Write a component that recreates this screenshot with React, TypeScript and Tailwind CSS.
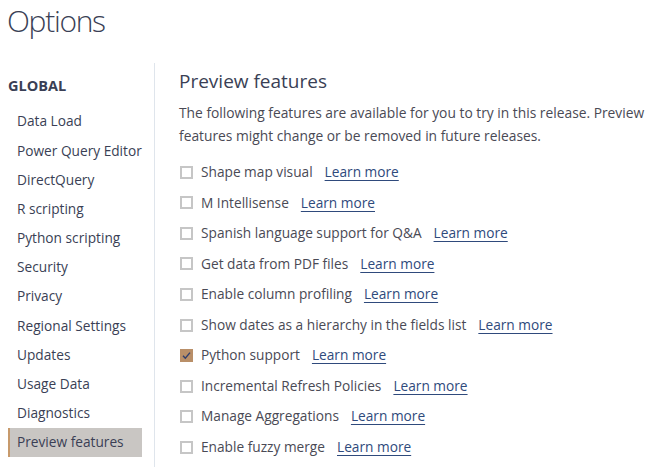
import React from "react";

const navItems = [
  "Data Load",
  "Power Query Editor",
  "DirectQuery",
  "R scripting",
  "Python scripting",
  "Security",
  "Privacy",
  "Regional Settings",
  "Updates",
  "Usage Data",
  "Diagnostics",
  "Preview features",
];

const features = [
  { label: "Shape map visual", checked: false },
  { label: "M Intellisense", checked: false },
  { label: "Spanish language support for Q&A", checked: false },
  { label: "Get data from PDF files", checked: false },
  { label: "Enable column profiling", checked: false },
  { label: "Show dates as a hierarchy in the fields list", checked: false },
  { label: "Python support", checked: true },
  { label: "Incremental Refresh Policies", checked: false },
  { label: "Manage Aggregations", checked: false },
  { label: "Enable fuzzy merge", checked: false },
];

function Checkbox({ checked }: { checked: boolean }) {
  if (checked) {
    return (
      <span className="flex h-[13px] w-[13px] shrink-0 items-center justify-center bg-[#b98f68]">
        <svg width="11" height="11" viewBox="0 0 11 11" fill="none">
          <path d="M2 5.8 L4.3 8.2 L9 2.6" stroke="#2f3f6e" strokeWidth="1.4" />
        </svg>
      </span>
    );
  }
  return <span className="h-[13px] w-[13px] shrink-0 border-2 border-[#c6c6c6] bg-white" />;
}

export default function App() {
  return (
    <div className="h-[470px] w-[656px] overflow-hidden bg-white text-[#3b3b45]" style={{ fontFamily: '"Open Sans", "Noto Sans", sans-serif' }}>
      {/* Title */}
      <h1 className="pl-[7px] pt-[2px] text-[30px] font-light leading-[38px] tracking-[-1.3px] text-[#3a3f55]">Options</h1>

      <div className="mt-[23px] flex">
        {/* Sidebar */}
        <div className="w-[154px] shrink-0 pl-[8px]">
          <div className="mt-[13px] text-[14.5px] font-bold leading-[20px] text-[#3a3f55]">GLOBAL</div>
          <ul className="mt-[11px] pr-[12px]">
            {navItems.map((item) => {
              const active = item === "Preview features";
              return (
                <li
                  key={item}
                  className={
                    active
                      ? "flex h-[29.2px] items-center border-l-2 border-[#c79a6c] bg-[#c9c6c3] pl-[7px] text-[13.7px] text-[#3a3f55]"
                      : "flex h-[29.2px] items-center pl-[9px] text-[13.7px] text-[#3a3f55]"
                  }
                >
                  {item}
                </li>
              );
            })}
          </ul>
        </div>

        {/* Divider */}
        <div className="h-[404px] w-px shrink-0 bg-[#dfe5ec]" />

        {/* Content */}
        <div className="pl-[24px] pr-[4px]">
          <h2 className="mt-[4px] text-[19px] leading-[28px] text-[#3a3f55]">Preview features</h2>
          <p className="mt-[6px] text-[13.8px] leading-[23px] text-[#4a4a55]">
            The following features are available for you to try in this release. Preview features might change or be removed in future releases.
          </p>
          <ul className="mt-[10px]">
            {features.map((f) => (
              <li key={f.label} className="flex h-[30.55px] items-center pl-[1px] text-[13.7px] text-[#4a4a55]">
                <Checkbox checked={f.checked} />
                <span className="ml-[8px]">{f.label}</span>
                <a className="ml-[12px] text-[#2f4a7c] underline underline-offset-[3px]">Learn more</a>
              </li>
            ))}
          </ul>
        </div>
      </div>
    </div>
  );
}
